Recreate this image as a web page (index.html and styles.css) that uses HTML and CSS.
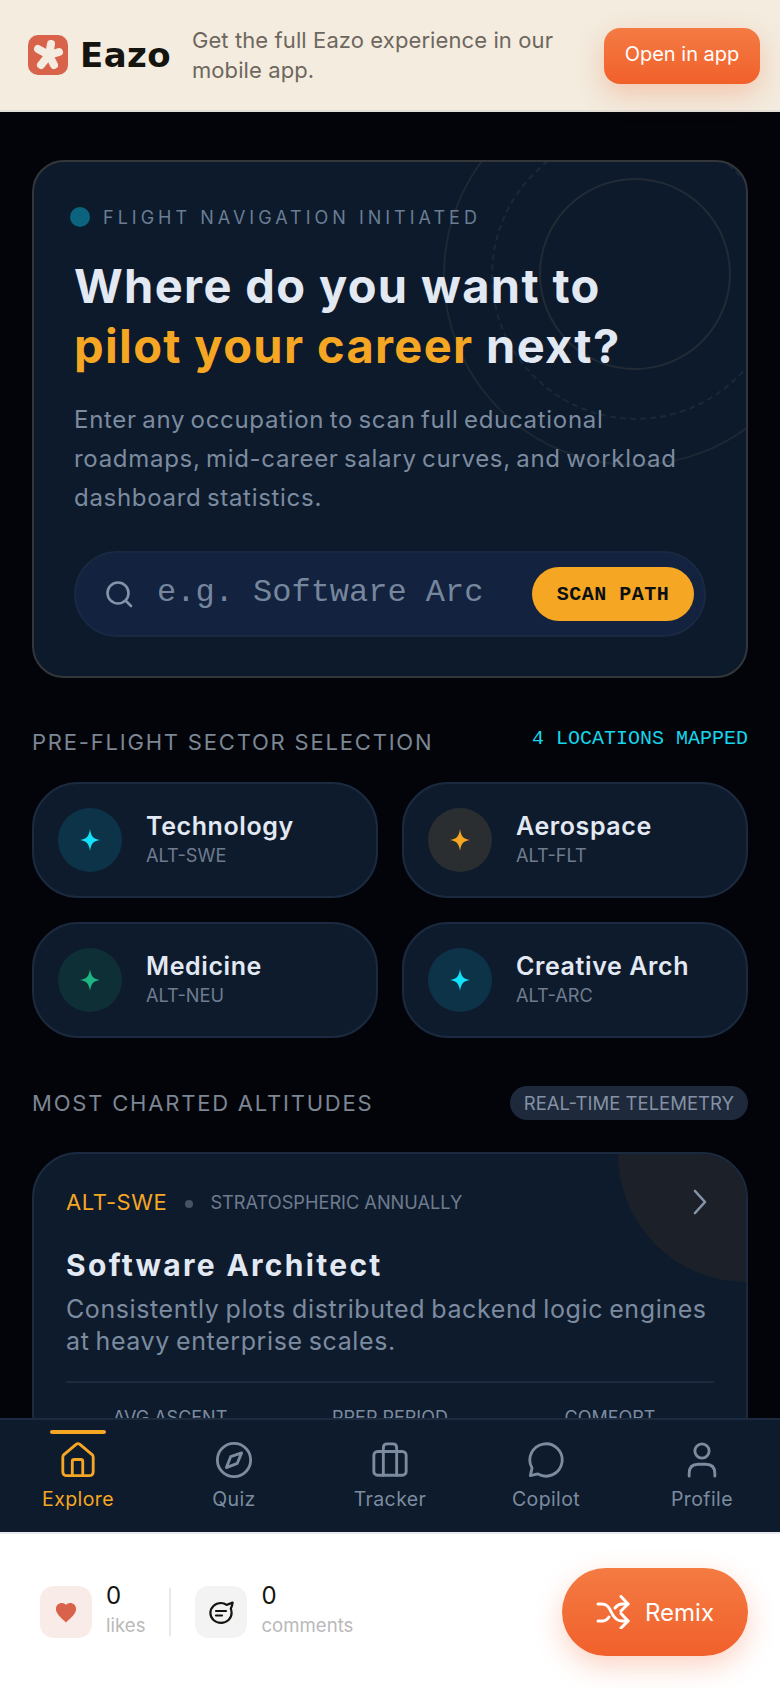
FILE: index.html
```html
<!DOCTYPE html>
<html>
<head>
	<title>Eazo</title>
	<meta charset="utf-8">
	<link rel="stylesheet" href="styles.css">
</head>
<body>
<div class="banner">
	<div class="brand">
		<svg class="brand-mark" viewBox="0 0 40 40">
			<rect width="40" height="40" rx="10" fill="#d9634a"/>
			<g stroke="#f4ece0" stroke-width="8" stroke-linecap="round">
				<line x1="21" y1="20" x2="23" y2="9"/>
				<line x1="21" y1="20" x2="31" y2="17"/>
				<line x1="21" y1="20" x2="26" y2="30"/>
				<line x1="21" y1="20" x2="13" y2="30"/>
				<line x1="21" y1="20" x2="10" y2="14"/>
			</g>
		</svg>
		<span class="brand-name">Eazo</span>
	</div>
	<p class="banner-text">Get the full Eazo experience in our mobile app.</p>
	<a class="open-btn">Open in app</a>
</div>

<div class="screen">
	<section class="hero">
		<div class="rings">
			<div class="ring ring-lg"></div>
			<div class="ring ring-md"></div>
			<div class="ring ring-sm"></div>
		</div>
		<div class="status"><span class="status-dot"></span>FLIGHT NAVIGATION INITIATED</div>
		<h1>Where do you want to <span class="accent">pilot your career</span> next?</h1>
		<p class="lead">Enter any occupation to scan full educational roadmaps, mid-career salary curves, and workload dashboard statistics.</p>
		<div class="search">
			<svg class="search-icon" viewBox="0 0 28 28" fill="none" stroke="#8494a8" stroke-width="2.6" stroke-linecap="round"><circle cx="13" cy="13" r="10.5"/><line x1="21" y1="21" x2="26" y2="26"/></svg>
			<span class="search-input">e.g. Software Arc</span>
			<a class="scan-btn">SCAN PATH</a>
		</div>
	</section>

	<div class="sec-head sec-first">
		<h2>PRE-FLIGHT SECTOR SELECTION</h2>
		<span class="mapped">4 LOCATIONS MAPPED</span>
	</div>
	<div class="sectors">
		<div class="sector">
			<div class="sector-icon ic-cyan"><svg viewBox="0 0 24 24"><path d="M12 1 C13 8 15 11 22 12 C15 13 13 16 12 23 C11 16 9 13 2 12 C9 11 11 8 12 1Z"/></svg></div>
			<div class="sector-text"><div class="sector-name">Technology</div><div class="sector-code">ALT-SWE</div></div>
		</div>
		<div class="sector">
			<div class="sector-icon ic-amber"><svg viewBox="0 0 24 24"><path d="M12 1 C13 8 15 11 22 12 C15 13 13 16 12 23 C11 16 9 13 2 12 C9 11 11 8 12 1Z"/></svg></div>
			<div class="sector-text"><div class="sector-name">Aerospace</div><div class="sector-code">ALT-FLT</div></div>
		</div>
		<div class="sector">
			<div class="sector-icon ic-green"><svg viewBox="0 0 24 24"><path d="M12 1 C13 8 15 11 22 12 C15 13 13 16 12 23 C11 16 9 13 2 12 C9 11 11 8 12 1Z"/></svg></div>
			<div class="sector-text"><div class="sector-name">Medicine</div><div class="sector-code">ALT-NEU</div></div>
		</div>
		<div class="sector">
			<div class="sector-icon ic-cyan"><svg viewBox="0 0 24 24"><path d="M12 1 C13 8 15 11 22 12 C15 13 13 16 12 23 C11 16 9 13 2 12 C9 11 11 8 12 1Z"/></svg></div>
			<div class="sector-text"><div class="sector-name">Creative Arch</div><div class="sector-code">ALT-ARC</div></div>
		</div>
	</div>

	<div class="sec-head sec-second">
		<h2>MOST CHARTED ALTITUDES</h2>
		<span class="telemetry">REAL-TIME TELEMETRY</span>
	</div>
	<article class="route">
		<div class="route-glow"></div>
		<div class="route-top">
			<span class="route-code">ALT-SWE</span>
			<span class="route-dot"></span>
			<span class="route-freq">STRATOSPHERIC ANNUALLY</span>
			<svg class="route-arrow" viewBox="0 0 14 26" fill="none" stroke="#8494a8" stroke-width="2.6" stroke-linecap="round" stroke-linejoin="round"><path d="M2 2 L12 13 L2 24"/></svg>
		</div>
		<h3>Software Architect</h3>
		<p class="route-desc">Consistently plots distributed backend logic engines at heavy enterprise scales.</p>
		<div class="route-stats">
			<span>AVG ASCENT</span>
			<span>PREP PERIOD</span>
			<span>COMFORT</span>
		</div>
	</article>
</div>

<nav class="tabs">
	<a class="tab tab-on">
		<svg viewBox="0 0 40 40"><path d="M4 17 Q4 15 5.500 14 L18 3.500 Q20 2 22 3.500 L34.500 14 Q36 15 36 17 V32 Q36 36.500 31.500 36.500 H8.500 Q4 36.500 4 32Z"/><path d="M14 36.500 V21.500 Q14 19.500 16 19.500 H23 Q25 19.500 25 21.500 V36.500"/></svg>
		<span>Explore</span>
	</a>
	<a class="tab">
		<svg viewBox="0 0 40 40"><circle cx="20" cy="20" r="17.5"/><path d="M28 12.500 L23.500 23.500 L12 28 L16.500 16.500Z"/></svg>
		<span>Quiz</span>
	</a>
	<a class="tab">
		<svg viewBox="0 0 40 40"><rect x="3" y="11" width="34" height="25" rx="4"/><path d="M13 36 V7 Q13 3 17 3 H23 Q27 3 27 7 V36"/></svg>
		<span>Tracker</span>
	</a>
	<a class="tab">
		<svg viewBox="0 0 40 40"><path d="M11.500 34.700 A17 17 0 1 0 5.300 28.500 L3.500 36.500Z"/></svg>
		<span>Copilot</span>
	</a>
	<a class="tab">
		<svg viewBox="0 0 40 40"><circle cx="20" cy="10.500" r="7.500"/><path d="M6.500 37 V34 Q6.500 24.500 16 24.500 H24 Q33.500 24.500 33.500 34 V37"/></svg>
		<span>Profile</span>
	</a>
</nav>

<footer class="bar">
	<div class="counts">
		<div class="count">
			<div class="count-tile tile-like"><svg viewBox="0 0 24 24" width="22" height="23"><path d="M12 23 C7 18 1 14 1 8 C1 4 4 1.500 7.500 1.500 C9.500 1.500 11 2.500 12 3.500 C13 2.500 14.500 1.500 16.500 1.500 C20 1.500 23 4 23 8 C23 14 17 18 12 23Z" fill="#d9634a"/></svg></div>
			<div class="count-text"><b>0</b><small>likes</small></div>
		</div>
		<div class="count-sep"></div>
		<div class="count">
			<div class="count-tile tile-comment"><svg viewBox="0 0 26 24" width="26" height="24" fill="none" stroke="#15140f" stroke-width="2.200" stroke-linecap="round" stroke-linejoin="round"><path d="M13 3 C15 3 17 3.600 18.600 4.800 C20.600 4.400 22.600 3.600 24.600 2.600 C24.400 4.600 23.800 6.800 22.800 8.600 C23.400 10 23.600 11.400 23.600 13 C23.600 18.500 19 22.800 13 22.800 C7 22.800 2.400 18.500 2.400 13 C2.400 7.500 7 3 13 3Z"/><line x1="8" y1="11" x2="18" y2="11"/><line x1="8" y1="15.500" x2="14" y2="15.500"/></svg></div>
			<div class="count-text"><b>0</b><small>comments</small></div>
		</div>
	</div>
	<a class="remix">
		<svg viewBox="0 0 34 34" fill="none" stroke="#fff" stroke-width="3" stroke-linecap="round" stroke-linejoin="round"><path d="M2 9 H6 C11 9 13 12 15.500 17.500 C18 23 21 26 26 26 H32"/><path d="M2 26 H6 C9 26 11 25 13 22"/><path d="M19 13 C21 10.500 23 9 26 9 H32"/><path d="M25 1.500 L32 9 L25 16"/><path d="M25 18.500 L32 26 L25 33"/></svg>
		Remix
	</a>
</footer>
</body>
</html>
```

FILE: styles.css
```css
*{
	margin: 0;
	padding: 0;
	box-sizing: border-box;
}
body{
	width: 780px;
	height: 1688px;
	display: flex;
	flex-direction: column;
	overflow: hidden;
	background: #02040a;
	font-family: Inter, "Noto Sans", sans-serif;
}

/* top banner */
.banner{
	position: relative;
	z-index: 3;
	height: 112px;
	flex: none;
	display: flex;
	align-items: center;
	padding: 0 20px 1px 28px;
	background: #f3ecdf;
	border-bottom: 2px solid #e3e0d8;
}
.brand{
	display: flex;
	align-items: center;
	gap: 12px;
	margin-right: 21px;
}
.brand-mark{
	width: 40px;
	height: 40px;
}
.brand-name{
	font-family: "DejaVu Sans", sans-serif;
	font-size: 34px;
	font-weight: 700;
	letter-spacing: .4px;
	color: #15140f;
}
.banner-text{
	flex: 1;
	font-size: 22px;
	line-height: 30px;
	letter-spacing: .1px;
	color: #6e675e;
}
.open-btn{
	width: 156px;
	height: 56px;
	margin-top: 2px;
	padding-bottom: 3px;
	border-radius: 16px;
	display: flex;
	align-items: center;
	justify-content: center;
	font-size: 20px;
	color: #fff;
	background: linear-gradient(#f47b43, #f1602b);
	box-shadow: 0 10px 28px rgba(241, 96, 43, .28);
}

/* scrolling area */
.screen{
	flex: 1;
	min-height: 0;
	overflow: hidden;
	padding: 48px 32px 0;
}

.hero{
	position: relative;
	height: 518px;
	padding: 45px 40px 0;
	overflow: hidden;
	border-radius: 32px;
	border: 2px solid #34373a;
	background: #0c1a2c;
}
.rings{
	position: absolute;
	top: 0;
	right: 0;
	left: 0;
	bottom: 0;
}
.ring{
	position: absolute;
	border-radius: 50%;
}
.ring-sm{
	left: 505px;
	top: 16px;
	width: 192px;
	height: 192px;
	border: 2px solid #222b35;
}
.ring-md{
	left: 457px;
	top: -32px;
	width: 290px;
	height: 290px;
	border: 2px dashed #19293c;
}
.ring-lg{
	left: 409px;
	top: -78px;
	width: 382px;
	height: 382px;
	border: 2px solid #1e2833;
}
.status{
	position: relative;
	display: flex;
	align-items: center;
	gap: 13px;
	height: 20px;
	margin-left: -4px;
	font-size: 18px;
	letter-spacing: 4px;
	color: #6a7d94;
}
.status-dot{
	width: 20px;
	height: 20px;
	border-radius: 50%;
	background: #0c637e;
}
h1{
	position: relative;
	margin-top: 29px;
	font-size: 47px;
	line-height: 60px;
	font-weight: 700;
	letter-spacing: 1.35px;
	color: #e2e9f3;
}
.accent{
	color: #f5a623;
}
.lead{
	position: relative;
	margin-top: 24px;
	font-size: 24px;
	line-height: 39px;
	letter-spacing: .7px;
	word-spacing: -2px;
	color: #7c8b9f;
}
.search{
	position: relative;
	display: flex;
	align-items: center;
	height: 86px;
	margin-top: 34px;
	padding: 0 10px 0 29px;
	border-radius: 43px;
	border: 2px solid #1a2942;
	background: #12223f;
}
.search-icon{
	width: 28px;
	height: 28px;
	flex: none;
}
.search-input{
	flex: 1;
	margin: -4px 0 0 24px;
	font-family: "Liberation Mono", monospace;
	font-size: 32px;
	color: #76869c;
}
.scan-btn{
	width: 162px;
	height: 54px;
	border-radius: 27px;
	display: flex;
	align-items: center;
	justify-content: center;
	font-family: "Liberation Mono", monospace;
	font-size: 20px;
	font-weight: 700;
	letter-spacing: .5px;
	color: #0a0f14;
	background: #f5a623;
}

/* section headings */
.sec-head{
	display: flex;
	align-items: center;
	justify-content: space-between;
}
.sec-first{
	margin-top: 47px;
	height: 34px;
}
.sec-second{
	margin-top: 48px;
	height: 34px;
}
h2{
	font-size: 22px;
	font-weight: 400;
	letter-spacing: 1.8px;
	color: #7d8693;
}
.mapped{
	font-family: "Liberation Mono", monospace;
	font-size: 20px;
	color: #16d6ea;
	margin-top: -8px;
}
.telemetry{
	height: 34px;
	padding: 0 14px;
	border-radius: 17px;
	display: flex;
	align-items: center;
	font-size: 18.5px;
	color: #8592a5;
	background: #1e293b;
}

/* sector grid */
.sectors{
	display: grid;
	grid-template-columns: 1fr 1fr;
	gap: 24px;
	margin-top: 23px;
}
.sector{
	height: 116px;
	display: flex;
	align-items: center;
	gap: 24px;
	padding-left: 24px;
	border-radius: 46px;
	border: 2px solid #1b2a3e;
	background: #0e1b2d;
}
.sector-icon{
	width: 64px;
	height: 64px;
	border-radius: 50%;
	display: flex;
	align-items: center;
	justify-content: center;
}
.sector-icon svg{
	width: 24px;
	height: 24px;
}
.ic-cyan{
	background: #0c3348;
}
.ic-cyan svg{
	fill: #12e2f8;
}
.ic-amber{
	background: #2a2e30;
}
.ic-amber svg{
	fill: #f5a623;
}
.ic-green{
	background: #0f2f36;
}
.ic-green svg{
	fill: #1fb583;
}
.sector-text{
	margin-top: -2px;
}
.sector-name{
	font-size: 25px;
	font-weight: 600;
	letter-spacing: .6px;
	line-height: 32px;
	color: #e2e9f3;
}
.sector-code{
	font-size: 18.2px;
	line-height: 26px;
	color: #6e7c8f;
}

/* route card */
.route{
	position: relative;
	margin-top: 32px;
	height: 400px;
	padding: 32px 32px 0;
	overflow: hidden;
	border-radius: 46px;
	border: 2px solid #1b2a3e;
	background: #0e1b2d;
}
.route-glow{
	position: absolute;
	top: -128px;
	right: -128px;
	width: 256px;
	height: 256px;
	border-radius: 50%;
	background: #1b2029;
}
.route-top{
	position: relative;
	display: flex;
	align-items: center;
	height: 32px;
}
.route-code{
	font-size: 22px;
	letter-spacing: .6px;
	color: #f5a623;
}
.route-dot{
	width: 8px;
	height: 8px;
	margin: 4px 17px 0 18px;
	border-radius: 50%;
	background: #465365;
}
.route-freq{
	flex: 1;
	font-size: 18.2px;
	color: #6e7c8f;
}
.route-arrow{
	width: 14px;
	height: 26px;
	margin-right: 7px;
}
h3{
	position: relative;
	margin-top: 28px;
	font-size: 30px;
	line-height: 38px;
	font-weight: 700;
	letter-spacing: 2.3px;
	color: #e2e9f3;
}
.route-desc{
	position: relative;
	margin-top: 9px;
	font-size: 25px;
	line-height: 32px;
	letter-spacing: .6px;
	word-spacing: -1.5px;
	color: #7c8b9f;
}
.route-stats{
	display: grid;
	grid-template-columns: repeat(3, 1fr);
	column-gap: 12px;
	margin-top: 24px;
	padding-top: 24px;
	border-top: 2px solid #1b2a3e;
	text-align: center;
	font-size: 18px;
	color: #7c8b9f;
}

/* bottom tabs */
.tabs{
	position: relative;
	z-index: 2;
	flex: none;
	height: 114px;
	display: flex;
	border-top: 2px solid #1b2a3e;
	background: #0d1b2c;
}
.tab{
	position: relative;
	flex: 1;
	display: flex;
	flex-direction: column;
	align-items: center;
	padding-top: 21px;
	font-size: 19.5px;
	color: #7c8b9f;
}
.tab svg{
	width: 38px;
	height: 38px;
	fill: none;
	stroke: #7c8b9f;
	stroke-width: 3;
	stroke-linejoin: round;
	stroke-linecap: round;
}
.tab span{
	margin-top: 8px;
	letter-spacing: .4px;
}
.tab-on{
	color: #f5a623;
}
.tab-on svg{
	stroke: #f5a623;
}
.tab-on::before{
	content: "";
	position: absolute;
	top: 10px;
	left: 50px;
	width: 56px;
	height: 4px;
	border-radius: 2px;
	background: #f5a623;
}

/* like bar */
.bar{
	flex: none;
	height: 156px;
	display: flex;
	align-items: center;
	justify-content: space-between;
	padding: 2px 32px 0 40px;
	background: #fff;
	border-top: 2px solid #e8e9ee;
}
.counts{
	display: flex;
	align-items: center;
}
.count{
	display: flex;
	align-items: center;
	gap: 14px;
}
.count-tile{
	width: 52px;
	height: 52px;
	border-radius: 14px;
	display: flex;
	align-items: center;
	justify-content: center;
}
.tile-like{
	background: #f9ece8;
}
.tile-comment{
	background: #f3f3f3;
}
.count-text{
	display: flex;
	flex-direction: column;
	margin-top: -5px;
}
.count-text b{
	font-size: 24px;
	line-height: 31px;
	font-weight: 400;
	color: #15140f;
}
.count-text small{
	font-size: 18.6px;
	line-height: 28px;
	color: #b9b9b9;
}
.count-sep{
	width: 2px;
	height: 48px;
	margin: 0 24px 0 24px;
	background: #e8e8e8;
}
.remix{
	width: 186px;
	height: 88px;
	border-radius: 44px;
	display: flex;
	align-items: center;
	justify-content: center;
	gap: 15px;
	font-size: 24px;
	color: #fff;
	background: linear-gradient(#f47b43, #f1602b);
	box-shadow: 0 10px 28px rgba(241, 96, 43, .28);
}
.remix svg{
	width: 34px;
	height: 34px;
}
```
